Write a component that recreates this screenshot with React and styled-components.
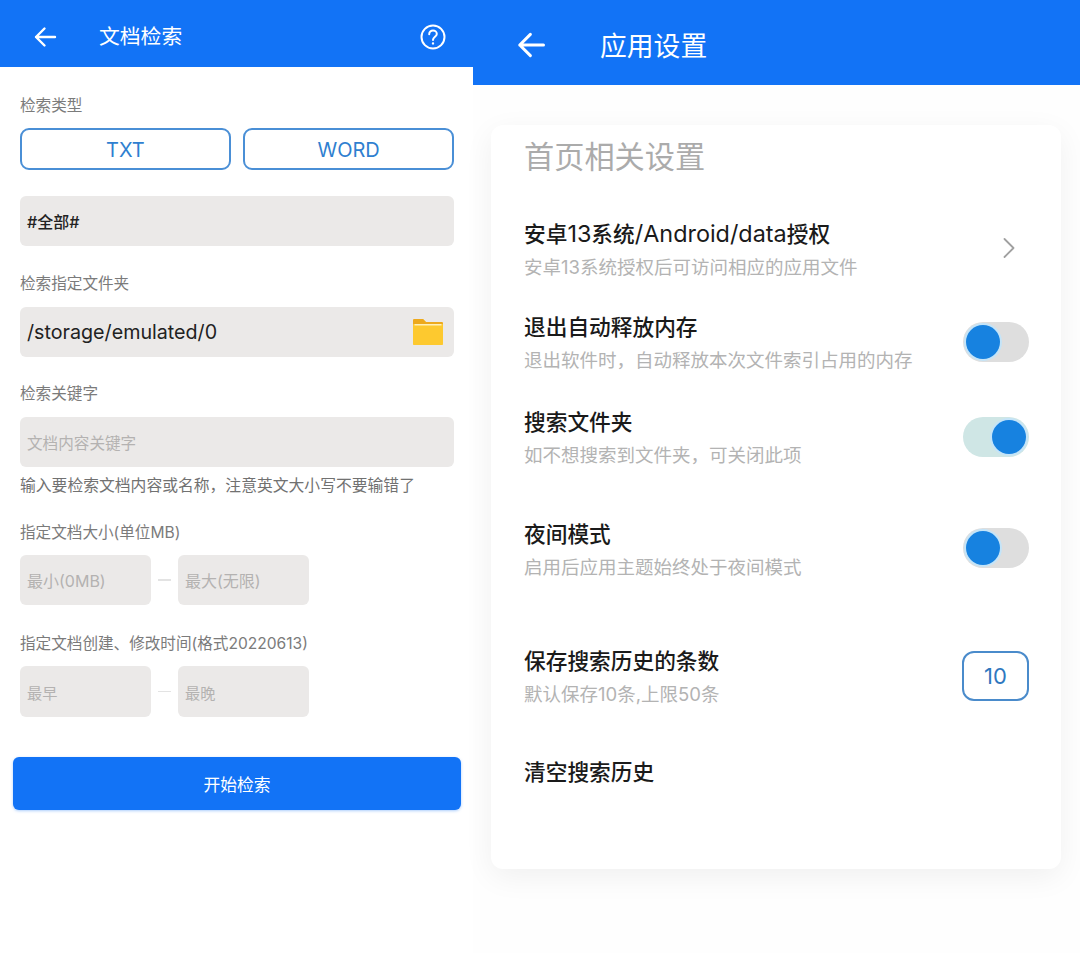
import React from "react";
import styled, { createGlobalStyle } from "styled-components";

const Global = createGlobalStyle`
  html, body { margin: 0; padding: 0; background: #fff; }
  body { font-family: Inter, "Noto Sans CJK SC", sans-serif; }
  * { box-sizing: border-box; }
`;

const Page = styled.div`
  display: flex;
  width: 1080px;
  height: 953px;
  overflow: hidden;
  background: #fff;
`;
const LeftPanel = styled.section`
  width: 473px;
  flex: none;
  display: flex;
  flex-direction: column;
`;
const RightPanel = styled.section`
  flex: 1;
  display: flex;
  flex-direction: column;
  background: #fefefe;
`;
const Bar = styled.header`
  height: ${(p) => p.$height}px;
  flex: none;
  display: flex;
  align-items: center;
  background: #1273f6;
  color: #fff;
  padding: ${(p) => p.$lift}px ${(p) => p.$right}px 0 ${(p) => p.$left}px;
`;
const BarTitle = styled.h1`
  margin: 0 0 0 ${(p) => p.$gap}px;
  padding-top: ${(p) => p.$drop}px;
  flex: 1;
  font-size: ${(p) => p.$size}px;
  font-weight: 400;
  line-height: 1;
`;
const LeftBody = styled.div`
  display: flex;
  flex-direction: column;
  padding: 0 19px 0 20px;
`;
const Label = styled.div`
  margin-top: ${(p) => p.$top}px;
  height: 20px;
  font-size: 15.6px;
  line-height: 20px;
  color: #7b7b7b;
  white-space: nowrap;
`;
const TypeRow = styled.div`
  display: flex;
  gap: 12.5px;
  margin-top: 12px;
`;
const TypeButton = styled.button`
  flex: 1;
  height: 42px;
  padding: 1px 0 0;
  border: 2px solid #4a8fd6;
  border-radius: 9px;
  background: #fff;
  color: #2f7fd0;
  font: 400 20px Inter, "Noto Sans CJK SC", sans-serif;
`;
const Field = styled.div`
  display: flex;
  align-items: center;
  justify-content: space-between;
  height: ${(p) => p.$height || 50}px;
  width: ${(p) => (p.$width ? `${p.$width}px` : "auto")};
  margin-top: ${(p) => p.$top}px;
  padding: 0 11px 0 7px;
  border-radius: 6px;
  background: #ebe9e8;
  color: ${(p) => (p.$muted ? "#b4b2b1" : "#222")};
  font-size: ${(p) => p.$size || 15.6}px;
  font-weight: ${(p) => p.$weight || 400};
  white-space: nowrap;
`;
const Helper = styled.div`
  margin-top: 9px;
  height: 20px;
  font-size: 15.8px;
  line-height: 20px;
  color: #717171;
  white-space: nowrap;
`;
const RangeRow = styled.div`
  display: flex;
  align-items: center;
  margin-top: ${(p) => p.$top}px;
`;
const RangeDash = styled.span`
  width: 13px;
  height: 1.5px;
  margin: 0 7px;
  flex: none;
  background: #e3e3e3;
`;
const SearchButton = styled.button`
  align-self: flex-start;
  width: 448px;
  height: 53px;
  margin: 40px 0 0 -7px;
  border: 0;
  border-radius: 6px;
  background: #1273f6;
  color: #fff;
  font: 400 16.8px Inter, "Noto Sans CJK SC", sans-serif;
  box-shadow: 0 1px 3px rgba(18, 115, 246, 0.35);
`;
const Card = styled.div`
  margin: 40px 19px 0 18px;
  height: 744px;
  padding: 10px 32px 0 33px;
  border-radius: 12px;
  background: #fff;
  box-shadow: 0 8px 30px rgba(0, 0, 0, 0.06);
`;
const CardTitle = styled.h2`
  margin: 0;
  height: 44px;
  font-size: 30.2px;
  font-weight: 400;
  line-height: 44px;
  color: #ababab;
`;
const Row = styled.div`
  display: flex;
  align-items: center;
  justify-content: space-between;
  margin-top: ${(p) => p.$top}px;
`;
const RowText = styled.div`
  display: flex;
  flex-direction: column;
  gap: 3px;
`;
const RowTitle = styled.div`
  height: 30px;
  font-size: 21.7px;
  font-weight: 500;
  line-height: 30px;
  color: #1a1a1a;
  white-space: nowrap;
`;
const Latin = styled.span`
  font-size: 23.4px;
  font-weight: 400;
`;
const RowDesc = styled.div`
  height: 30px;
  font-size: 18.5px;
  line-height: 30px;
  color: #b3b3b3;
  white-space: nowrap;
`;
const Track = styled.div`
  display: flex;
  align-items: center;
  justify-content: ${(p) => (p.$on ? "flex-end" : "flex-start")};
  width: 66px;
  height: 40px;
  margin-bottom: ${(p) => p.$raise}px;
  padding: 0 3px;
  border-radius: 20px;
  background: ${(p) => (p.$on ? "#cfe6e5" : "#dedede")};
`;
const Knob = styled.span`
  width: 34px;
  height: 34px;
  border-radius: 50%;
  background: #1782e0;
  box-shadow: 0 0 0 2px #c4e4f8;
`;
const NumberBox = styled.div`
  display: flex;
  align-items: center;
  justify-content: center;
  width: 67px;
  height: 50px;
  margin-bottom: 4px;
  border: 2px solid #4a8bcb;
  border-radius: 12px;
  color: #2f78bf;
  font-size: 22px;
`;
const Chevron = styled.span`
  display: flex;
  margin: 0 13px 6px 0;
  color: #a0a0a0;
`;

const Back = ({ size }) => (
  <svg width={size} height={size} viewBox="0 0 24 24" fill="none" stroke="currentColor" strokeWidth="2.4" strokeLinecap="round" strokeLinejoin="round">
    <path d="M22 12H3M11.5 3.5 3 12l8.5 8.5" />
  </svg>
);
const Help = () => (
  <svg width="26" height="26" viewBox="0 0 26 26" fill="none" stroke="currentColor" strokeWidth="2" strokeLinecap="round">
    <circle cx="13" cy="13" r="11.5" />
    <path d="M9.2 10.2c0-2.2 1.7-3.6 3.8-3.6s3.8 1.4 3.8 3.3c0 2.8-3.8 3-3.8 6" />
    <circle cx="13" cy="19.4" r="0.6" fill="currentColor" strokeWidth="1.2" />
  </svg>
);
const Folder = () => (
  <svg width="30" height="26" viewBox="0 0 30 26">
    <path d="M0 1.5C0 .6.6 0 1.5 0H10l3 3h15.5C29.4 3 30 3.6 30 4.5V25c0 .6-.4 1-1 1H1c-.6 0-1-.4-1-1Z" fill="#fdc92f" />
    <path d="M0 1.5C0 .6.6 0 1.5 0H10l3 3h15.5C29.4 3 30 3.6 30 4.5V5H0Z" fill="#eda91d" />
    <rect x="1.5" y="5" width="27" height="1.5" fill="#fff0b8" />
  </svg>
);
const Right = () => (
  <svg width="14" height="22" viewBox="0 0 14 22" fill="none" stroke="currentColor" strokeWidth="1.8" strokeLinecap="round" strokeLinejoin="round">
    <path d="M2.5 2 11.5 11l-9 9" />
  </svg>
);

const settings = [
  { id: "a13", top: 40, title: <>安卓<Latin>13</Latin>系统<Latin>/Android/data</Latin>授权</>, desc: "安卓13系统授权后可访问相应的应用文件", chevron: true },
  { id: "exit", top: 30, title: "退出自动释放内存", desc: "退出软件时，自动释放本次文件索引占用的内存", on: false, raise: 4 },
  { id: "dir", top: 32, title: "搜索文件夹", desc: "如不想搜索到文件夹，可关闭此项", on: true, raise: 4 },
  { id: "night", top: 49, title: "夜间模式", desc: "启用后应用主题始终处于夜间模式", on: false, raise: 6 },
  { id: "hist", top: 64, title: "保存搜索历史的条数", desc: "默认保存10条,上限50条", count: "10" },
];

export default function App() {
  return (
    <Page>
      <Global />
      <LeftPanel>
        <Bar $height={67} $left={33} $right={27} $lift={6}>
          <Back size={24} />
          <BarTitle $gap={42} $size={20.8} $drop={2}>文档检索</BarTitle>
          <Help />
        </Bar>
        <LeftBody>
          <Label $top={29}>检索类型</Label>
          <TypeRow>
            <TypeButton>TXT</TypeButton>
            <TypeButton>WORD</TypeButton>
          </TypeRow>
          <Field $top={26} $weight={500} $size={16}>#全部#</Field>
          <Label $top={28}>检索指定文件夹</Label>
          <Field $top={13} $size={19.7}>/storage/emulated/0<Folder /></Field>
          <Label $top={27}>检索关键字</Label>
          <Field $top={13} $muted>文档内容关键字</Field>
          <Helper>输入要检索文档内容或名称，注意英文大小写不要输错了</Helper>
          <Label $top={27}>指定文档大小(单位MB)</Label>
          <RangeRow $top={12}>
            <Field $top={0} $width={131} $muted $size={16}>最小(0MB)</Field>
            <RangeDash />
            <Field $top={0} $width={131} $muted $size={16}>最大(无限)</Field>
          </RangeRow>
          <Label $top={29}>指定文档创建、修改时间(格式20220613)</Label>
          <RangeRow $top={12}>
            <Field $top={0} $width={131} $height={51} $muted $size={15.2}>最早</Field>
            <RangeDash />
            <Field $top={0} $width={131} $height={51} $muted $size={15.2}>最晚</Field>
          </RangeRow>
          <SearchButton>开始检索</SearchButton>
        </LeftBody>
      </LeftPanel>
      <RightPanel>
        <Bar $height={85} $left={43} $right={30} $lift={4}>
          <Back size={30} />
          <BarTitle $gap={54} $size={26.8} $drop={3}>应用设置</BarTitle>
        </Bar>
        <Card>
          <CardTitle>首页相关设置</CardTitle>
          {settings.map((s) => (
            <Row key={s.id} $top={s.top}>
              <RowText>
                <RowTitle>{s.title}</RowTitle>
                <RowDesc>{s.desc}</RowDesc>
              </RowText>
              {s.chevron && <Chevron><Right /></Chevron>}
              {s.on !== undefined && <Track $on={s.on} $raise={s.raise}><Knob /></Track>}
              {s.count && <NumberBox>{s.count}</NumberBox>}
            </Row>
          ))}
          <Row $top={48}>
            <RowTitle>清空搜索历史</RowTitle>
          </Row>
        </Card>
      </RightPanel>
    </Page>
  );
}
